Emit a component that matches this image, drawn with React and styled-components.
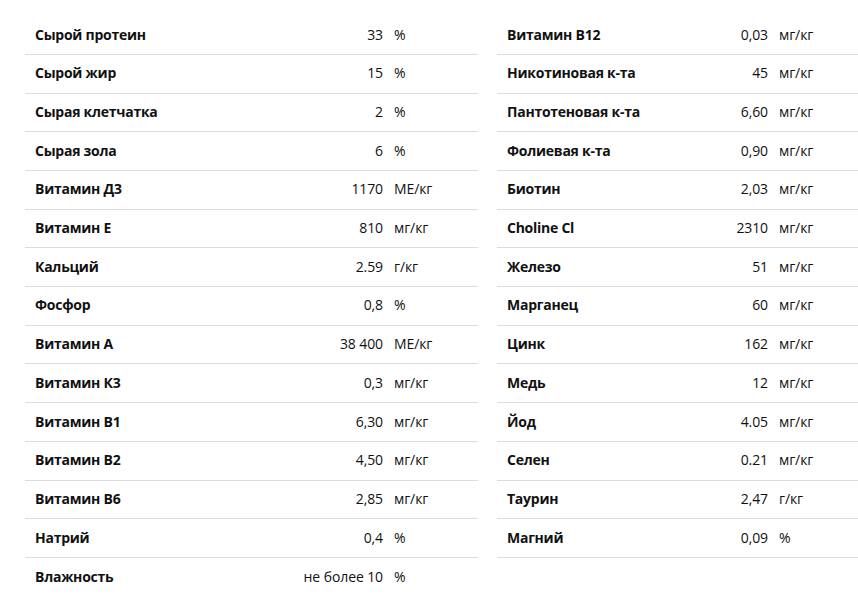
import React from 'react';
import styled, { createGlobalStyle } from 'styled-components';

const GlobalStyle = createGlobalStyle`
  html, body {
    margin: 0;
    padding: 0;
    background: #fff;
  }
  body {
    font-family: "Open Sans", "Noto Sans", sans-serif;
    color: #111;
  }
`;

const left = [
  ['Сырой протеин', '33', '%'],
  ['Сырой жир', '15', '%'],
  ['Сырая клетчатка', '2', '%'],
  ['Сырая зола', '6', '%'],
  ['Витамин Д3', '1170', 'МЕ/кг'],
  ['Витамин Е', '810', 'мг/кг'],
  ['Кальций', '2.59', 'г/кг'],
  ['Фосфор', '0,8', '%'],
  ['Витамин А', '38 400', 'МЕ/кг'],
  ['Витамин К3', '0,3', 'мг/кг'],
  ['Витамин В1', '6,30', 'мг/кг'],
  ['Витамин В2', '4,50', 'мг/кг'],
  ['Витамин В6', '2,85', 'мг/кг'],
  ['Натрий', '0,4', '%'],
  ['Влажность', 'не более 10', '%'],
];

const right = [
  ['Витамин В12', '0,03', 'мг/кг'],
  ['Никотиновая к-та', '45', 'мг/кг'],
  ['Пантотеновая к-та', '6,60', 'мг/кг'],
  ['Фолиевая к-та', '0,90', 'мг/кг'],
  ['Биотин', '2,03', 'мг/кг'],
  ['Choline Cl', '2310', 'мг/кг'],
  ['Железо', '51', 'мг/кг'],
  ['Марганец', '60', 'мг/кг'],
  ['Цинк', '162', 'мг/кг'],
  ['Медь', '12', 'мг/кг'],
  ['Йод', '4.05', 'мг/кг'],
  ['Селен', '0.21', 'мг/кг'],
  ['Таурин', '2,47', 'г/кг'],
  ['Магний', '0,09', '%'],
];

const App = () => {
  return (
    <>
      <GlobalStyle />
      <Page>
        <Table $width={453}>
          {left.map(([name, value, unit], i) => (
            <Row key={name} $labelW={248} $last={i === left.length - 1}>
              <Name>{name}</Name>
              <Value>{value}</Value>
              <Unit>{unit}</Unit>
            </Row>
          ))}
        </Table>
        <Table $width={380}>
          {right.map(([name, value, unit]) => (
            <Row key={name} $labelW={161}>
              <Name>{name}</Name>
              <Value>{value}</Value>
              <Unit>{unit}</Unit>
            </Row>
          ))}
        </Table>
      </Page>
    </>
  );
};

export default App;

const Page = styled.div`
  display: flex;
  align-items: flex-start;
  gap: 19px;
  padding: 16.3px 0 0 25px;
  width: 858px;
  box-sizing: border-box;
  overflow: hidden;
`;

const Table = styled.div`
  flex: 0 0 ${p => p.$width}px;
  display: flex;
  flex-direction: column;
`;

const Row = styled.div`
  display: grid;
  grid-template-columns: ${p => p.$labelW}px 100px 1fr;
  align-items: center;
  height: 38.7px;
  box-sizing: border-box;
  padding: 0 0 2px 10px;
  border-bottom: ${p => (p.$last ? 'none' : '1px solid #dcdcdc')};
  font-size: 14px;
`;

const Name = styled.span`
  font-weight: 700;
  letter-spacing: -0.25px;
  white-space: nowrap;
`;

const Value = styled.span`
  text-align: right;
  letter-spacing: -0.1px;
  white-space: nowrap;
`;

const Unit = styled.span`
  padding-left: 11px;
  letter-spacing: -0.1px;
  white-space: nowrap;
`;
